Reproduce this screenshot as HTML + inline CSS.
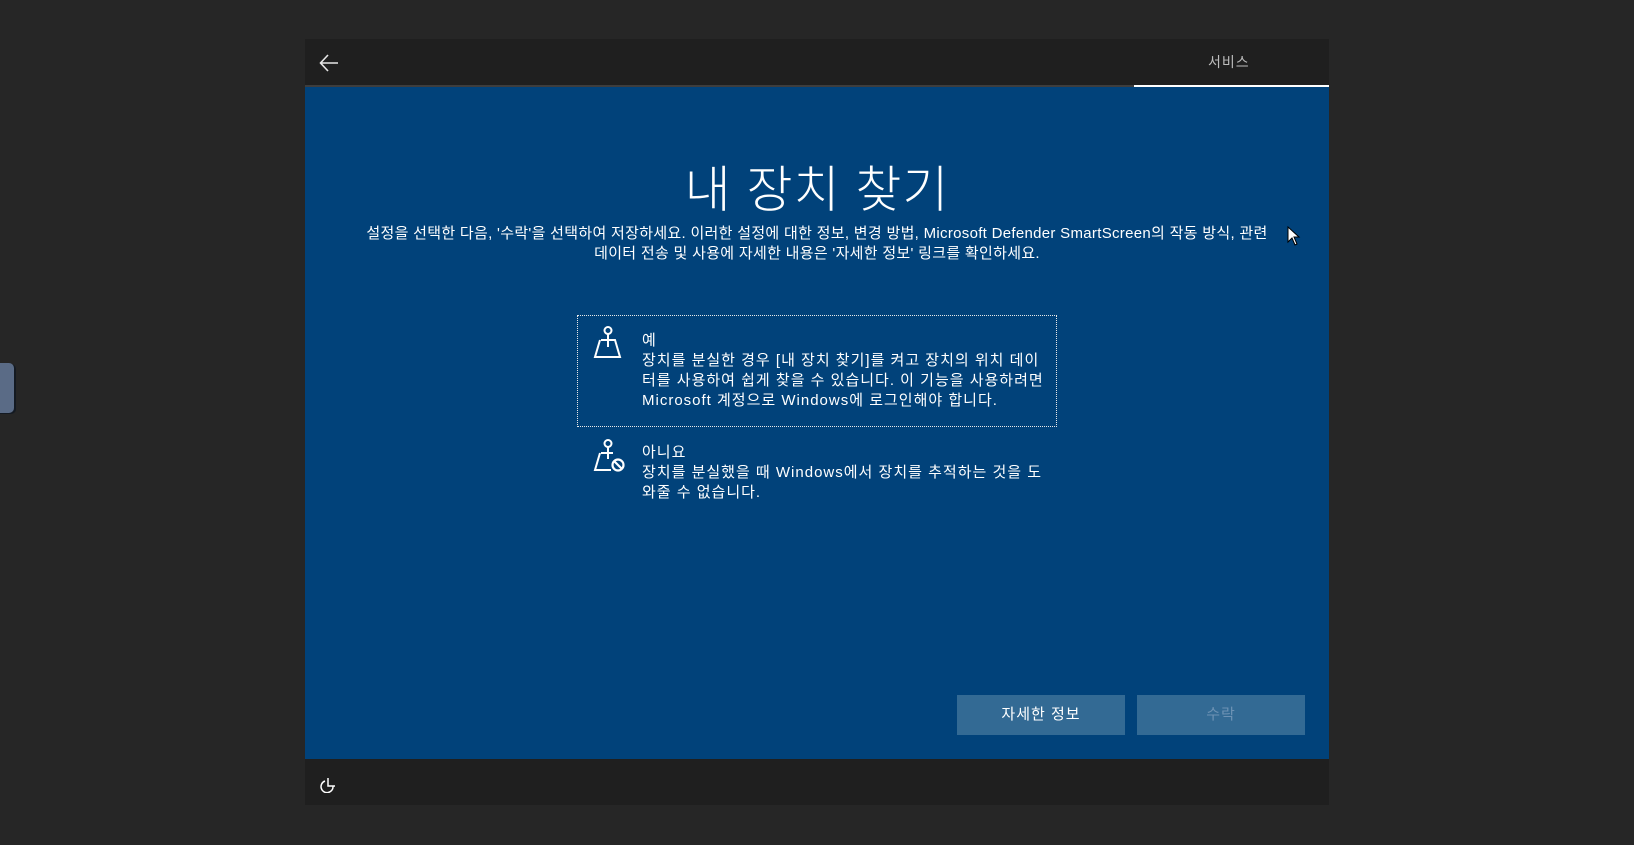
<!DOCTYPE html>
<html><head><meta charset="utf-8"><style>
*{margin:0;padding:0;box-sizing:border-box}
html,body{width:1634px;height:845px;overflow:hidden;background:#262626;font-family:"Liberation Sans","Noto Sans CJK KR",sans-serif;color:#fff}
.abs{position:absolute}
.top{left:305px;top:39px;width:1024px;height:46px;background:#1f1f1f}
.sep{left:305px;top:85px;width:1024px;height:2px;background:#3d3d3d}
.tabline{left:1134px;top:85px;width:195px;height:2px;background:#fff}
.blue{left:305px;top:87px;width:1024px;height:672px;background:#01427a}
.bot{left:305px;top:759px;width:1024px;height:46px;background:#1f1f1f}
.title{left:305px;width:1024px;top:155px;text-align:center;font-size:50px;font-weight:300;line-height:70px;letter-spacing:1px}
.sub{left:305px;width:1024px;top:224px;text-align:center;font-size:15px;line-height:20px;letter-spacing:0.3px;white-space:nowrap}
.box{left:577px;top:315px;width:480px;height:112px;border:1px dotted #e8e8e8}
.opt{font-size:15px;line-height:20px;white-space:nowrap;letter-spacing:1px}
.btn{top:695px;width:168px;height:40px;background:#336a94;text-align:center;line-height:40px;font-size:15px}
</style></head><body>
<div class="abs top"></div>
<div class="abs sep"></div>
<div class="abs tabline"></div>
<svg class="abs" style="left:319px;top:54px" width="20" height="18" viewBox="0 0 20 18"><path d="M9 1 L1.5 9 L9 17 M1.5 9 H19" stroke="#e6e6e6" stroke-width="1.6" fill="none"/></svg>
<div class="abs" style="left:1208px;top:52px;font-size:14px;line-height:20px;color:#bdbdbd;letter-spacing:1px">서비스</div>
<div class="abs blue"></div>
<div class="abs title">내 장치 찾기</div>
<div class="abs sub">설정을 선택한 다음, '수락'을 선택하여 저장하세요. 이러한 설정에 대한 정보, 변경 방법, Microsoft Defender SmartScreen의 작동 방식, 관련<br>데이터 전송 및 사용에 자세한 내용은 '자세한 정보' 링크를 확인하세요.</div>
<div class="abs box"></div>
<svg class="abs" style="left:593px;top:326px" width="32" height="34" viewBox="0 0 32 34"><circle cx="15" cy="4.5" r="3.5" stroke="#fff" stroke-width="2" fill="none"/><path d="M15 8 V21 M8 14 H22 L27 31 H2 L7 14" stroke="#fff" stroke-width="2" fill="none"/></svg>
<div class="abs opt" style="left:642px;top:331px">예<br>장치를 분실한 경우 [내 장치 찾기]를 켜고 장치의 위치 데이<br>터를 사용하여 쉽게 찾을 수 있습니다. 이 기능을 사용하려면<br>Microsoft 계정으로 Windows에 로그인해야 합니다.</div>
<svg class="abs" style="left:593px;top:439px" width="34" height="34" viewBox="0 0 34 34"><circle cx="15" cy="4.5" r="3.5" stroke="#fff" stroke-width="2" fill="none"/><path d="M15 8 V20 M8 14 H20 M7 14 L2 31 H18" stroke="#fff" stroke-width="2" fill="none"/><circle cx="25" cy="26" r="5.5" stroke="#fff" stroke-width="2.2" fill="none"/><path d="M21 22 L29 30" stroke="#fff" stroke-width="2.2"/></svg>
<div class="abs opt" style="left:642px;top:443px">아니요<br>장치를 분실했을 때 Windows에서 장치를 추적하는 것을 도<br>와줄 수 없습니다.</div>
<div class="abs btn" style="left:957px;letter-spacing:1px">자세한 정보</div>
<div class="abs btn" style="left:1137px;color:#6d92b4;letter-spacing:1px">수락</div>
<div class="abs bot"></div>
<svg class="abs" style="left:320px;top:776px" width="18" height="17" viewBox="0 0 18 17"><path d="M5 5 A6 6 0 1 0 13 10" stroke="#fff" stroke-width="1.5" fill="none"/><path d="M8 2 V10 H15" stroke="#fff" stroke-width="1.5" fill="none"/></svg>
<div class="abs" style="left:-6px;top:363px;width:20px;height:50px;background:#5a6b86;border-radius:5px;box-shadow:2px 1px 0 #141a22"></div>
<svg class="abs" style="left:1287px;top:226px" width="14" height="20" viewBox="0 0 14 20"><path d="M1 1 V16 L5 12 L8 19 L10 18 L7 11 H12 Z" fill="#fff" stroke="#000" stroke-width="1"/></svg>
</body></html>
